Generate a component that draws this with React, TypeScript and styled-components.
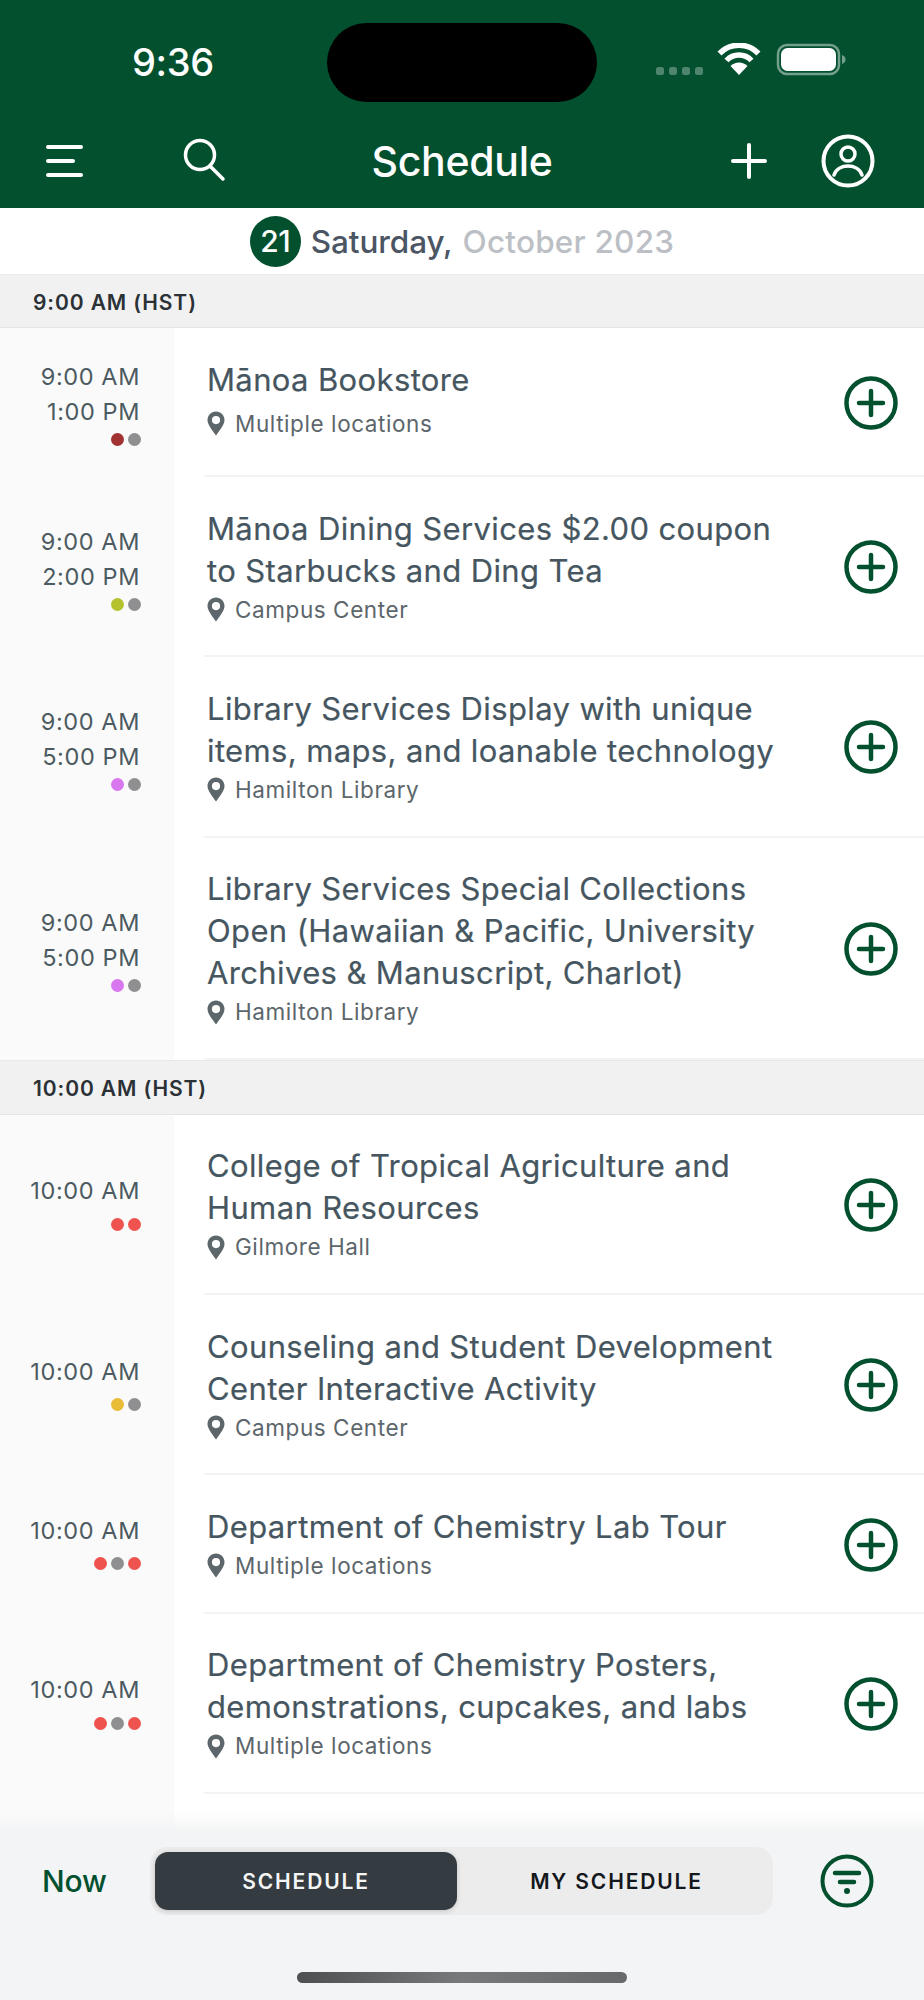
import React from "react";
import styled, { createGlobalStyle } from "styled-components";

const Global = createGlobalStyle`
  html, body { margin: 0; padding: 0; background: #fff; }
  body { font-family: Inter, "Liberation Sans", sans-serif; }
  * { box-sizing: border-box; }
`;

const GREEN = "#03502f";

const Page = styled.div`
  width: 924px;
  height: 2000px;
  display: flex;
  flex-direction: column;
  overflow: hidden;
  background: #fff;
`;
const Header = styled.header`
  height: 208px;
  background: ${GREEN};
  display: flex;
  flex-direction: column;
  color: #fff;
`;
const StatusBar = styled.div`
  height: 123px;
  padding: 23px 0 0 0;
  display: flex;
  align-items: flex-start;
`;
const Clock = styled.div`
  width: 327px;
  text-align: center;
  font-size: 38px;
  line-height: 78px;
  font-weight: 500;
  letter-spacing: -0.3px;
  padding-left: 19px;
`;
const Island = styled.div`
  width: 270px;
  height: 79px;
  border-radius: 40px;
  background: #000;
`;
const StatusIcons = styled.div`
  display: flex;
  align-items: flex-start;
  margin-left: 59px;
  margin-top: 20px;
`;
const NavBar = styled.nav`
  height: 85px;
  display: flex;
  align-items: center;
  padding: 0 49px 10px 45px;
`;
const NavTitle = styled.h1`
  flex: 1;
  margin: 0;
  text-align: center;
  font-size: 41px;
  font-weight: 500;
  letter-spacing: -0.3px;
  padding-right: 36px;
`;
const NavIcon = styled.svg<{ $ml?: number }>`
  display: block;
  flex: none;
  margin-left: ${(p) => p.$ml ?? 0}px;
`;
const DateBar = styled.div`
  height: 66px;
  background: #fff;
  display: flex;
  align-items: center;
  justify-content: center;
  font-size: 31.5px;
  font-weight: 500;
  color: #4b5563;
  gap: 10px;
`;
const DayBadge = styled.span`
  width: 51px;
  height: 51px;
  border-radius: 50%;
  background: ${GREEN};
  color: #fff;
  display: flex;
  align-items: center;
  justify-content: center;
  font-size: 30px;
  letter-spacing: -0.5px;
`;
const DateText = styled.span`
  color: #4b5563;
  letter-spacing: -0.1px;
`;
const DateMuted = styled.span`
  color: #bcc0c5;
  font-weight: 500;
  letter-spacing: 0.2px;
`;
const List = styled.main`
  flex: 1;
  display: flex;
  flex-direction: column;
  min-height: 0;
`;
const GroupHeader = styled.div<{ $h: number }>`
  height: ${(p) => p.$h}px;
  flex: none;
  background: #f1f1f1;
  border-top: 1px solid #e9e9e9;
  border-bottom: 1px solid #e4e4e4;
  display: flex;
  align-items: center;
  padding: 2px 0 0 33px;
  font-size: 21px;
  font-weight: 600;
  letter-spacing: 0.9px;
  color: #2b3136;
`;
const Row = styled.div`
  display: flex;
  flex: none;
`;
const TimeCol = styled.div`
  width: 174px;
  flex: none;
  background: #fafafa;
  display: flex;
  flex-direction: column;
  align-items: flex-end;
  justify-content: center;
  padding: 31px 34px 31px 0;
  font-size: 23.5px;
  line-height: 35px;
  letter-spacing: 0.6px;
  color: #4c5a61;
`;
const Dots = styled.div<{ $single: boolean }>`
  display: flex;
  gap: 4px;
  margin-top: ${(p) => (p.$single ? 9.5 : 4)}px;
  margin-bottom: ${(p) => (p.$single ? 6 : 0)}px;
  margin-right: -1px;
  height: 13px;
`;
const Dot = styled.span<{ $c: string }>`
  width: 13px;
  height: 13px;
  border-radius: 50%;
  background: ${(p) => p.$c};
`;
const RowMain = styled.div`
  flex: 1;
  margin-left: 30px;
  display: flex;
  align-items: center;
  border-bottom: 2px solid #f2f3f3;
  padding: 2px 26px 0 0;
`;
const Body = styled.div`
  flex: 1;
  align-self: stretch;
  display: flex;
  flex-direction: column;
  padding: 28.5px 0 27.8px 3px;
`;
const Title = styled.div`
  font-size: 31px;
  line-height: 42px;
  font-weight: 400;
  letter-spacing: 0.37px;
  color: #465660;
  -webkit-text-stroke: 0.2px #465660;
`;
const Place = styled.div`
  display: flex;
  align-items: center;
  gap: 10px;
  font-size: 22.5px;
  line-height: 36px;
  letter-spacing: 0.58px;
  color: #5c666b;
  margin: auto 0;
`;
const Filler = styled.div`
  flex: 1;
  min-height: 0;
  width: 174px;
  background: #fafafa;
`;
const Footer = styled.footer`
  position: relative;
  height: 168px;
  flex: none;
  background: #f3f4f5;
  display: flex;
  flex-direction: column;
  &::before {
    content: "";
    position: absolute;
    left: 0;
    right: 0;
    top: -20px;
    height: 20px;
    background: linear-gradient(to bottom, rgba(243, 244, 245, 0), #f3f4f5);
  }
`;
const FooterBar = styled.div`
  display: flex;
  align-items: center;
  padding: 15px 50px 0 42px;
`;
const NowLink = styled.div`
  width: 110px;
  font-size: 30px;
  font-weight: 500;
  color: ${GREEN};
  letter-spacing: -0.1px;
`;
const Segmented = styled.div`
  width: 623px;
  height: 68px;
  background: #ececec;
  border-radius: 17px;
  padding: 5px;
  display: flex;
`;
const Segment = styled.div<{ $active?: boolean }>`
  width: ${(p) => (p.$active ? "302px" : "311px")};
  border-radius: 13px;
  background: ${(p) => (p.$active ? "#343b41" : "transparent")};
  box-shadow: ${(p) => (p.$active ? "0 1px 5px rgba(0,0,0,.18)" : "none")};
  color: ${(p) => (p.$active ? "#f4f5f5" : "#14181c")};
  display: flex;
  align-items: center;
  justify-content: center;
  padding-left: ${(p) => (p.$active ? 0 : 8)}px;
  font-size: 21px;
  font-weight: 600;
  letter-spacing: 1.85px;
`;
const HomeIndicator = styled.div`
  width: 330px;
  height: 11px;
  border-radius: 6px;
  margin: 57px auto 0;
  background: linear-gradient(to right, #4d4f50, #77797a 50%, #68696a);
`;

type Ev = { from: string; to?: string; dots: string[]; title: React.ReactNode; place: string };
const RED = "#ef5350";
const GRAY = "#8f8f91";

const group1: Ev[] = [
  { from: "9:00 AM", to: "1:00 PM", dots: ["#a23232", GRAY], title: "Mānoa Bookstore", place: "Multiple locations" },
  { from: "9:00 AM", to: "2:00 PM", dots: ["#b5c22e", GRAY], title: <>Mānoa Dining Services $2.00 coupon<br />to Starbucks and Ding Tea</>, place: "Campus Center" },
  { from: "9:00 AM", to: "5:00 PM", dots: ["#d977ee", GRAY], title: <>Library Services Display with unique<br />items, maps, and loanable technology</>, place: "Hamilton Library" },
  { from: "9:00 AM", to: "5:00 PM", dots: ["#d977ee", GRAY], title: <>Library Services Special Collections<br />Open (Hawaiian &amp; Pacific, University<br />Archives &amp; Manuscript, Charlot)</>, place: "Hamilton Library" },
];
const group2: Ev[] = [
  { from: "10:00 AM", dots: [RED, RED], title: <>College of Tropical Agriculture and<br />Human Resources</>, place: "Gilmore Hall" },
  { from: "10:00 AM", dots: ["#e8bc37", GRAY], title: <>Counseling and Student Development<br />Center Interactive Activity</>, place: "Campus Center" },
  { from: "10:00 AM", dots: [RED, GRAY, RED], title: "Department of Chemistry Lab Tour", place: "Multiple locations" },
  { from: "10:00 AM", dots: [RED, GRAY, RED], title: <>Department of Chemistry Posters,<br />demonstrations, cupcakes, and labs</>, place: "Multiple locations" },
];

const Pin = () => (
  <svg width="18" height="25" viewBox="0 0 18 25">
    <path fillRule="evenodd" fill="#5c666b" d="M9 0.5C4.1 0.5 0.5 4.2 0.5 9c0 5 5.2 10.6 8.5 15.5C12.3 19.6 17.5 14 17.5 9 17.5 4.2 13.9 0.5 9 0.5ZM9 5a4.1 4.1 0 1 1 0 8.2A4.1 4.1 0 0 1 9 5Z" />
  </svg>
);

const AddIcon = () => (
  <NavIcon width="54" height="54" viewBox="0 0 54 54">
    <circle cx="27" cy="27" r="24.5" fill="none" stroke={GREEN} strokeWidth="4.5" />
    <path d="M27 15v24M15 27h24" stroke={GREEN} strokeWidth="4.5" strokeLinecap="round" />
  </NavIcon>
);

const EventRow = ({ e }: { e: Ev }) => (
  <Row>
    <TimeCol>
      <div>{e.from}</div>
      {e.to && <div>{e.to}</div>}
      <Dots $single={!e.to}>
        {e.dots.map((c, i) => (
          <Dot key={i} $c={c} />
        ))}
      </Dots>
    </TimeCol>
    <RowMain>
      <Body>
        <Title>{e.title}</Title>
        <Place>
          <Pin />
          {e.place}
        </Place>
      </Body>
      <AddIcon />
    </RowMain>
  </Row>
);

export default function App() {
  return (
    <Page>
      <Global />
      <Header>
        <StatusBar>
          <Clock>9:36</Clock>
          <Island />
          <StatusIcons>
            <NavIcon width="190" height="60" viewBox="0 0 190 60">
              <g fill="#fff" opacity="0.3">
                <rect x="0" y="24" width="8" height="8" rx="2.5" />
                <rect x="13" y="24" width="8" height="8" rx="2.5" />
                <rect x="26" y="24" width="8" height="8" rx="2.5" />
                <rect x="39" y="24" width="8" height="8" rx="2.5" />
              </g>
              <g fill="none" stroke="#fff" strokeWidth="5.5">
                <path d="M63.5 10.5a27 27 0 0 1 39 0" />
                <path d="M70.5 17.5a17 17 0 0 1 25 0" />
              </g>
              <path fill="#fff" d="M74.5 23a12 12 0 0 1 17 0L83 32Z" />
              <rect x="122" y="2" width="61" height="29" rx="9" fill="none" stroke="#fff" strokeOpacity=".45" strokeWidth="2.5" />
              <rect x="125" y="5" width="55" height="23" rx="6.5" fill="#fff" />
              <path d="M186 12c3 1 3.5 3 3.5 4.5s-.5 3.5-3.5 4.5Z" fill="#fff" opacity=".45" />
            </NavIcon>
          </StatusIcons>
        </StatusBar>
        <NavBar>
          <NavIcon width="40" height="36" viewBox="0 0 40 36">
            <path d="M3 4h33M3 18h25M3 32h33" stroke="#fff" strokeWidth="4" strokeLinecap="round" />
          </NavIcon>
          <NavIcon $ml={98} width="46" height="46" viewBox="0 0 46 46">
            <circle cx="17" cy="17" r="14.5" fill="none" stroke="#fff" strokeWidth="3.5" />
            <path d="M28 29l12 12" stroke="#fff" strokeWidth="3.5" strokeLinecap="round" />
          </NavIcon>
          <NavTitle>Schedule</NavTitle>
          <NavIcon width="36" height="36" viewBox="0 0 36 36">
            <path d="M18 2v32M2 18h32" stroke="#fff" strokeWidth="4" strokeLinecap="round" />
          </NavIcon>
          <NavIcon $ml={54} width="54" height="54" viewBox="0 0 54 54">
            <circle cx="27" cy="27" r="24.5" fill="none" stroke="#fff" strokeWidth="4" />
            <circle cx="27" cy="20" r="7" fill="none" stroke="#fff" strokeWidth="3.5" />
            <path d="M13 41c2-6 8-9 14-9s12 3 14 9" fill="none" stroke="#fff" strokeWidth="3.5" strokeLinecap="round" />
          </NavIcon>
        </NavBar>
      </Header>
      <DateBar>
        <DayBadge>21</DayBadge>
        <DateText>Saturday,</DateText>
        <DateMuted>October 2023</DateMuted>
      </DateBar>
      <List>
        <GroupHeader $h={54}>9:00 AM (HST)</GroupHeader>
        {group1.map((e, i) => (
          <EventRow key={i} e={e} />
        ))}
        <GroupHeader $h={55}>10:00 AM (HST)</GroupHeader>
        {group2.map((e, i) => (
          <EventRow key={i} e={e} />
        ))}
        <Filler />
      </List>
      <Footer>
        <FooterBar>
          <NowLink>Now</NowLink>
          <Segmented>
            <Segment $active>SCHEDULE</Segment>
            <Segment>MY SCHEDULE</Segment>
          </Segmented>
          <NavIcon $ml={47} width="54" height="54" viewBox="0 0 54 54">
            <circle cx="27" cy="27" r="24.5" fill="none" stroke={GREEN} strokeWidth="4" />
            <path d="M15 19h24M20 28h14" stroke={GREEN} strokeWidth="4.5" strokeLinecap="round" />
            <circle cx="27" cy="37" r="3" fill={GREEN} />
          </NavIcon>
        </FooterBar>
        <HomeIndicator />
      </Footer>
    </Page>
  );
}
